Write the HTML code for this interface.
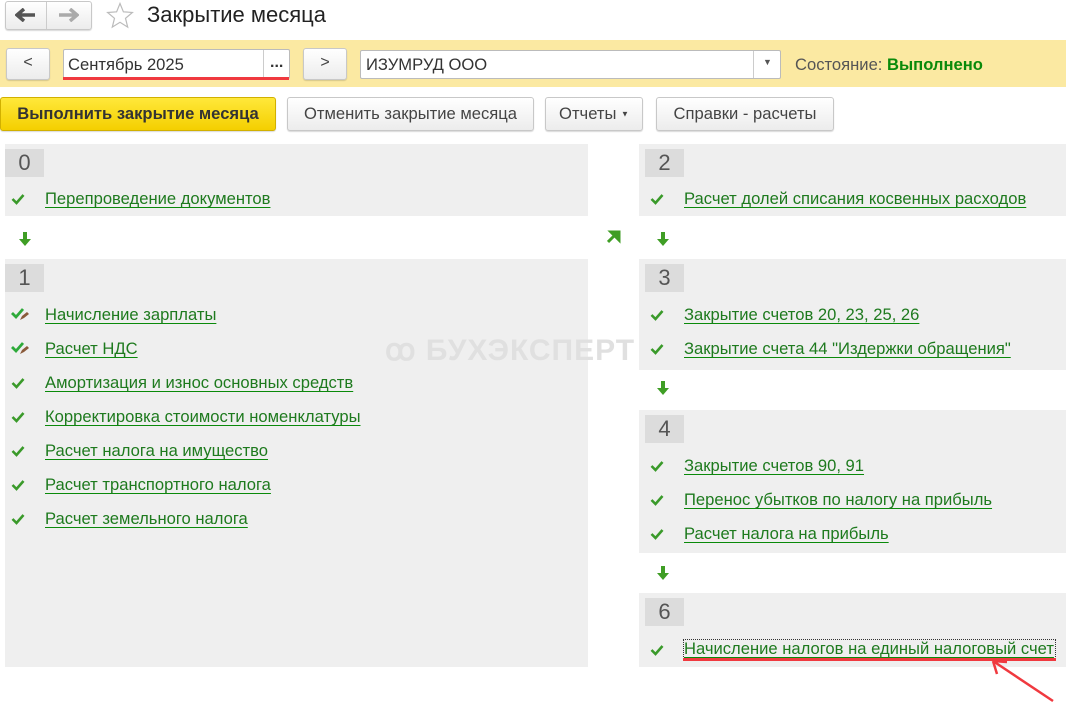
<!DOCTYPE html>
<html><head><meta charset="utf-8"><style>
*{box-sizing:border-box;margin:0;padding:0}
body{width:1066px;height:703px;background:#fff;font-family:"Liberation Sans",Arial,sans-serif;position:relative;overflow:hidden;color:#333}
.abs{position:absolute}
.btn{position:absolute;border:1px solid #c8c8c8;border-radius:3px;background:linear-gradient(#fff,#ececec);font-size:16px;color:#444;text-align:center;box-shadow:0 1px 1px rgba(0,0,0,.15)}
.gray{position:absolute;background:#efefef}
.num{position:absolute;background:#dcdcdc;width:39px;height:28px;font-size:22px;color:#555;text-align:center;line-height:28px}
.item{position:absolute;font-size:16.6px;color:#1e7a1e;text-decoration:underline;text-decoration-color:#0a8a0a;text-underline-offset:3px;white-space:nowrap}
.chk{position:absolute;width:14px;height:12px}
.arr{position:absolute;width:12px;height:14px}
</style></head><body>
<div class="btn" style="left:5px;top:1px;width:87px;height:29px;"></div>
<div class="abs" style="left:46px;top:2px;width:1px;height:27px;background:#ccc"></div>
<svg class="abs" style="left:15px;top:8px" width="22" height="14"><path d="M2 7h18M9 1L2 7l7 6" stroke="#555" stroke-width="3.5" fill="none"/></svg>
<svg class="abs" style="left:57px;top:8px" width="22" height="14"><path d="M2 7h18M13 1l7 6-7 6" stroke="#aaa" stroke-width="3.5" fill="none"/></svg>
<svg class="abs" style="left:106px;top:2px" width="28" height="27"><path d="M14 1.5l3.4 8.3 9 .7-6.9 5.8 2.2 8.8L14 20.3l-7.7 4.8 2.2-8.8-6.9-5.8 9-.7z" fill="none" stroke="#bbb" stroke-width="1.2"/></svg>
<div class="abs" style="left:147px;top:2px;font-size:22px;color:#222">Закрытие месяца</div>
<div class="abs" style="left:0;top:40px;width:1066px;height:47px;background:#fbe9a2"></div>
<div class="btn" style="left:6px;top:48px;width:44px;height:32px;line-height:28px">&lt;</div>
<div class="abs" style="left:63px;top:49px;width:227px;height:30px;background:#fff;border:1px solid #bbb;border-radius:2px"></div>
<div class="abs" style="left:68px;top:55px;font-size:16.6px;color:#333">Сентябрь 2025</div>
<div class="abs" style="left:263px;top:50px;width:1px;height:28px;background:#ccc"></div>
<div class="abs" style="left:270px;top:54px;font-size:16px;color:#333;font-weight:bold">...</div>
<div class="abs" style="left:63px;top:77px;width:226px;height:3px;background:#f0393f"></div>
<div class="btn" style="left:303px;top:48px;width:44px;height:32px;line-height:28px">&gt;</div>
<div class="abs" style="left:360px;top:50px;width:421px;height:29px;background:#fff;border:1px solid #bbb;border-radius:2px"></div>
<div class="abs" style="left:366px;top:55px;font-size:16.6px;color:#333">ИЗУМРУД ООО</div>
<div class="abs" style="left:753px;top:51px;width:1px;height:27px;background:#ccc"></div>
<div class="abs" style="left:763px;top:57px;font-size:9px;color:#555">▼</div>
<div class="abs" style="left:795px;top:55px;font-size:16.6px;color:#555">Состояние: <b style="color:#0a8a0a">Выполнено</b></div>
<div class="btn" style="left:0;top:97px;width:276px;height:34px;background:linear-gradient(#ffe83a,#f4cf00);border-color:#d1b000;font-weight:bold;color:#333;line-height:32px;font-size:16.6px">Выполнить закрытие месяца</div>
<div class="btn" style="left:287px;top:97px;width:247px;height:34px;line-height:32px;font-size:16.6px">Отменить закрытие месяца</div>
<div class="btn" style="left:545px;top:97px;width:98px;height:34px;line-height:32px;font-size:16.6px">Отчеты <span style="font-size:8px;vertical-align:middle">▼</span></div>
<div class="btn" style="left:656px;top:97px;width:178px;height:34px;line-height:32px;font-size:16.6px">Справки - расчеты</div>
<div class="gray" style="left:5px;top:144px;width:583px;height:72px"></div>
<div class="gray" style="left:5px;top:259px;width:583px;height:408px"></div>
<div class="gray" style="left:639px;top:144px;width:427px;height:72px"></div>
<div class="gray" style="left:639px;top:259px;width:427px;height:111px"></div>
<div class="gray" style="left:639px;top:410px;width:427px;height:143px"></div>
<div class="gray" style="left:639px;top:593px;width:427px;height:74px"></div>
<div class="abs" style="left:385px;top:333px;font-size:30px;font-weight:bold;color:#e0e0e0;letter-spacing:1px">ꝏ БУХЭКСПЕРТ</div>
<div class="num" style="left:5px;top:149px">0</div>
<div class="num" style="left:5px;top:264px">1</div>
<div class="num" style="left:645px;top:149px">2</div>
<div class="num" style="left:645px;top:264px">3</div>
<div class="num" style="left:645px;top:415px">4</div>
<div class="num" style="left:645px;top:598px">6</div>
<svg width="0" height="0" style="position:absolute"><defs>
<symbol id="c" viewBox="0 0 14 12"><path d="M1.5 6l4 4L12.5 2" stroke="#3a9a2a" stroke-width="2.6" fill="none"/></symbol>
<symbol id="a" viewBox="0 0 12 14"><path d="M4 0h4v7h4l-6 7-6-7h4z" fill="#3f9e25"/></symbol>
<symbol id="ce" viewBox="0 0 18 14"><path d="M1 6l4 4L12 2" stroke="#2eaa3a" stroke-width="2.8" fill="none"/><path d="M9 13l2-4 5-4 2 2-5 4z" fill="#8a5a3a"/></symbol>
</defs></svg>
<svg class="chk" style="left:11px;top:193px"><use href="#c"/></svg><div class="item" style="left:45px;top:189px">Перепроведение документов</div>
<svg class="arr" style="left:19px;top:232px"><use href="#a"/></svg>
<svg class="abs" style="left:11px;top:307px" width="18" height="14"><use href="#ce"/></svg><div class="item" style="left:45px;top:305px">Начисление зарплаты</div>
<svg class="abs" style="left:11px;top:341px" width="18" height="14"><use href="#ce"/></svg><div class="item" style="left:45px;top:339px">Расчет НДС</div>
<svg class="chk" style="left:11px;top:377px"><use href="#c"/></svg><div class="item" style="left:45px;top:373px">Амортизация и износ основных средств</div>
<svg class="chk" style="left:11px;top:411px"><use href="#c"/></svg><div class="item" style="left:45px;top:407px">Корректировка стоимости номенклатуры</div>
<svg class="chk" style="left:11px;top:445px"><use href="#c"/></svg><div class="item" style="left:45px;top:441px">Расчет налога на имущество</div>
<svg class="chk" style="left:11px;top:479px"><use href="#c"/></svg><div class="item" style="left:45px;top:475px">Расчет транспортного налога</div>
<svg class="chk" style="left:11px;top:513px"><use href="#c"/></svg><div class="item" style="left:45px;top:509px">Расчет земельного налога</div>
<svg class="abs" style="left:607px;top:230px" width="14" height="14"><path d="M1 12L9 4M4 2h8v8z" stroke="#3f9e25" stroke-width="3" fill="#3f9e25"/></svg>
<svg class="chk" style="left:650px;top:193px"><use href="#c"/></svg><div class="item" style="left:684px;top:189px">Расчет долей списания косвенных расходов</div>
<svg class="arr" style="left:657px;top:232px"><use href="#a"/></svg>
<svg class="chk" style="left:650px;top:309px"><use href="#c"/></svg><div class="item" style="left:684px;top:305px">Закрытие счетов 20, 23, 25, 26</div>
<svg class="chk" style="left:650px;top:343px"><use href="#c"/></svg><div class="item" style="left:684px;top:339px">Закрытие счета 44 "Издержки обращения"</div>
<svg class="arr" style="left:657px;top:381px"><use href="#a"/></svg>
<svg class="chk" style="left:650px;top:460px"><use href="#c"/></svg><div class="item" style="left:684px;top:456px">Закрытие счетов 90, 91</div>
<svg class="chk" style="left:650px;top:494px"><use href="#c"/></svg><div class="item" style="left:684px;top:490px">Перенос убытков по налогу на прибыль</div>
<svg class="chk" style="left:650px;top:528px"><use href="#c"/></svg><div class="item" style="left:684px;top:524px">Расчет налога на прибыль</div>
<svg class="arr" style="left:657px;top:566px"><use href="#a"/></svg>
<svg class="chk" style="left:650px;top:644px"><use href="#c"/></svg>
<div class="abs" style="left:683px;top:639px;width:373px;height:20px;border:1px dotted #333"></div>
<div class="item" style="left:684px;top:639px">Начисление налогов на единый налоговый счет</div>
<div class="abs" style="left:683px;top:658px;width:373px;height:3px;background:#f0393f"></div>
<svg class="abs" style="left:985px;top:655px" width="70" height="50"><path d="M68 46L8 6M8 6l14 1M8 6l4 13" stroke="#f0393f" stroke-width="2.5" fill="none"/></svg>
</body></html>
